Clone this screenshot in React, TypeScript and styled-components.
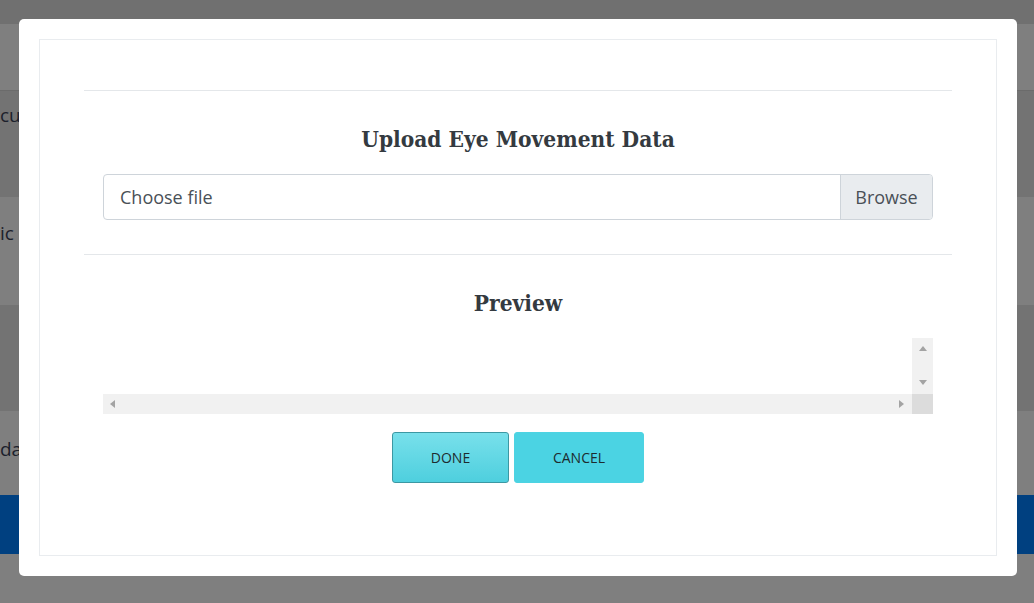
import React from "react";
import styled, { createGlobalStyle } from "styled-components";

const Global = createGlobalStyle`
  html, body { margin: 0; padding: 0; }
  body {
    width: 1034px;
    height: 603px;
    overflow: hidden;
    background: #7f7f7f;
    font-family: "Open Sans", "Liberation Sans", sans-serif;
  }
`;

const Page = styled.div`
  display: flex;
  flex-direction: column;
  width: 1034px;
  height: 603px;
  background: #7f7f7f;
`;

const TopBar = styled.div`
  height: 24px;
  background: #707070;
`;

const Row = styled.div<{ $h: number; $dark?: boolean; $line?: boolean }>`
  height: ${(p) => p.$h}px;
  box-sizing: border-box;
  background: ${(p) => (p.$dark ? "#737373" : "#7f7f7f")};
  border-bottom: ${(p) => (p.$line ? "1px solid #6b6b6b" : "none")};
  display: flex;
  align-items: flex-start;
  font-size: 19px;
  color: #1c212c;
  white-space: nowrap;
`;

const RowText = styled.span<{ $top: number }>`
  margin-top: ${(p) => p.$top}px;
`;

const BlueBar = styled.div`
  height: 59px;
  background: #004080;
`;

const Modal = styled.div`
  position: fixed;
  left: 19px;
  top: 19px;
  width: 998px;
  height: 557px;
  box-sizing: border-box;
  background: #fff;
  border-radius: 5px;
  padding: 20px;
  display: flex;
`;

const Inner = styled.div`
  flex: 1;
  border: 1px solid #e9ecef;
  padding: 50px 44px 0;
  display: flex;
  flex-direction: column;
  align-items: stretch;
`;

const Rule = styled.div`
  height: 1px;
  background: #e4e7ea;
`;

const Title = styled.h2<{ $mt: number }>`
  margin: ${(p) => p.$mt}px 0 0;
  font-family: "DejaVu Serif Condensed", "DejaVu Serif", serif;
  font-stretch: condensed;
  font-weight: bold;
  font-size: 22.5px;
  line-height: 31px;
  height: 31px;
  text-align: center;
  color: #343a40;
`;

const FileInput = styled.div`
  margin: 19px 19px 0;
  height: 46px;
  box-sizing: border-box;
  border: 1px solid #ced4da;
  border-radius: 4px;
  display: flex;
  overflow: hidden;
`;

const FileLabel = styled.div`
  flex: 1;
  display: flex;
  align-items: center;
  padding-left: 16px;
  font-size: 18px;
  color: #495057;
`;

const BrowseBtn = styled.div`
  width: 91px;
  border-left: 1px solid #ced4da;
  background: #e9ecef;
  display: flex;
  align-items: center;
  justify-content: center;
  font-size: 18px;
  color: #495057;
`;

const SpacedRule = styled(Rule)`
  margin-top: 34px;
`;

const ScrollBox = styled.div`
  margin: 19px 19px 0;
  height: 76px;
  display: grid;
  grid-template-columns: 1fr 21px;
  grid-template-rows: 56px 20px;
`;

const ScrollContent = styled.div`
  background: #fff;
`;

const VTrack = styled.div`
  background: #f1f1f1;
  display: flex;
  flex-direction: column;
  align-items: center;
  justify-content: space-between;
  padding: 8px 0 9px;
`;

const HTrack = styled.div`
  background: #f1f1f1;
  display: flex;
  align-items: center;
  justify-content: space-between;
  padding: 0 8px 0 7px;
`;

const Corner = styled.div`
  background: #dcdcdc;
`;

const Arrow = styled.div<{ $dir: "up" | "down" | "left" | "right" }>`
  width: 0;
  height: 0;
  ${(p) =>
    p.$dir === "up"
      ? "border-left: 4.5px solid transparent; border-right: 4.5px solid transparent; border-bottom: 5px solid #a3a3a3;"
      : p.$dir === "down"
      ? "border-left: 4.5px solid transparent; border-right: 4.5px solid transparent; border-top: 5px solid #a3a3a3;"
      : p.$dir === "left"
      ? "border-top: 4.5px solid transparent; border-bottom: 4.5px solid transparent; border-right: 5px solid #a3a3a3;"
      : "border-top: 4.5px solid transparent; border-bottom: 4.5px solid transparent; border-left: 5px solid #a3a3a3;"}
`;

const Buttons = styled.div`
  margin-top: 18px;
  display: flex;
  justify-content: center;
  gap: 5px;
`;

const Btn = styled.button<{ $primary?: boolean; $w: number }>`
  width: ${(p) => p.$w}px;
  height: 51px;
  box-sizing: border-box;
  border-radius: 3px;
  border: 1px solid ${(p) => (p.$primary ? "#3c98a3" : "#4dd3e2")};
  background: ${(p) =>
    p.$primary ? "linear-gradient(#78e0eb, #4ecfde)" : "#4bd3e3"};
  font-family: "Open Sans", "Liberation Sans", sans-serif;
  font-size: 14px;
  color: #1d2b2e;
  padding: 0;
  cursor: pointer;
`;

export default function App() {
  return (
    <>
      <Global />
      <Page>
        <TopBar />
        <Row $h={67} $line />
        <Row $h={106} $dark>
          <RowText $top={11}>cur</RowText>
        </Row>
        <Row $h={108}>
          <RowText $top={23}>ic c</RowText>
        </Row>
        <Row $h={106} $dark />
        <Row $h={84}>
          <RowText $top={25}>data</RowText>
        </Row>
        <BlueBar />
      </Page>
      <Modal>
        <Inner>
          <Rule />
          <Title $mt={33}>Upload Eye Movement Data</Title>
          <FileInput>
            <FileLabel>Choose file</FileLabel>
            <BrowseBtn>Browse</BrowseBtn>
          </FileInput>
          <SpacedRule />
          <Title $mt={33}>Preview</Title>
          <ScrollBox>
            <ScrollContent />
            <VTrack>
              <Arrow $dir="up" />
              <Arrow $dir="down" />
            </VTrack>
            <HTrack>
              <Arrow $dir="left" />
              <Arrow $dir="right" />
            </HTrack>
            <Corner />
          </ScrollBox>
          <Buttons>
            <Btn $primary $w={117}>DONE</Btn>
            <Btn $w={130}>CANCEL</Btn>
          </Buttons>
        </Inner>
      </Modal>
    </>
  );
}
